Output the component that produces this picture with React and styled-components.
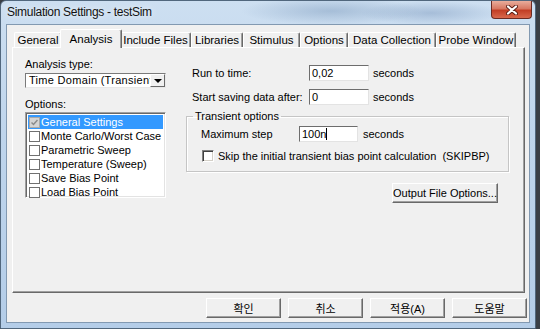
import React from "react";
import styled, { createGlobalStyle } from "styled-components";

const GlobalStyle = createGlobalStyle`
  html, body {
    margin: 0;
    padding: 0;
    background: #3a3f46;
  }
  body {
    font-family: "Liberation Sans", "Noto Sans CJK KR", sans-serif;
    font-size: 11px;
    color: #000;
  }
  * { box-sizing: border-box; }
`;

const Window = styled.div`
  width: 536px;
  height: 329px;
  display: flex;
  flex-direction: column;
  border: 1px solid #51677d;
  border-radius: 6px 6px 0 0;
  padding: 0 5px 5px;
  background:
    radial-gradient(ellipse 90px 14px at 330px 10px, rgba(120, 150, 185, 0.45), transparent),
    radial-gradient(ellipse 70px 12px at 430px 12px, rgba(110, 140, 180, 0.4), transparent),
    linear-gradient(180deg, #cddff1 0%, #bfd5ec 40%, #b4cde8 100%);
`;

const TitleBar = styled.div`
  height: 23px;
  margin: 0 -5px;
  padding: 0 3px 0 6px;
  display: flex;
  align-items: flex-start;
`;

const Title = styled.span`
  font-size: 12px;
  line-height: 22px;
  letter-spacing: -0.3px;
  color: #111;
  text-shadow: 0 0 6px rgba(255, 255, 255, 0.9);
`;

const CloseButton = styled.div`
  margin-left: auto;
  width: 41px;
  height: 18px;
  border: 1px solid #6b2a22;
  border-top: none;
  border-radius: 0 0 4px 4px;
  background: linear-gradient(180deg, #e9ad9c 0%, #d77862 45%, #c23e25 55%, #d8684c 100%);
  display: flex;
  align-items: center;
  justify-content: center;
`;

const Client = styled.div`
  flex: 1;
  display: flex;
  flex-direction: column;
  background: #f0f0f0;
  border: 1px solid #8299b1;
  padding: 4px 4px 3px 5px;
`;

const TabStrip = styled.div`
  display: flex;
  align-items: flex-end;
  height: 18px;
  padding-left: 2px;
  position: relative;
  z-index: 1;
`;

const Tab = styled.div`
  width: ${(p) => (p.$active ? p.$w + 4 : p.$w)}px;
  height: ${(p) => (p.$active ? 19 : 15)}px;
  margin: ${(p) => (p.$active ? "0 -2px -1px" : "0")};
  background: #f0f0f0;
  border-top: 1px solid #fff;
  border-left: 1px solid #fff;
  border-right: 1px solid #696969;
  box-shadow: inset -1px 0 0 #a0a0a0;
  border-radius: 2px 2px 0 0;
  display: flex;
  align-items: ${(p) => (p.$active ? "flex-start" : "center")};
  justify-content: center;
  padding-top: ${(p) => (p.$active ? 2 : 0)}px;
  font-size: 11.5px;
  line-height: 14px;
  white-space: nowrap;
  position: relative;
  z-index: ${(p) => (p.$active ? 2 : 1)};
`;

const Panel = styled.div`
  height: 246px;
  display: flex;
  gap: 20px;
  padding: 9px 0 0 12px;
  border: 1px solid;
  border-color: #fff #696969 #696969 #fff;
  box-shadow: inset -1px -1px 0 #a0a0a0;
`;

const LeftColumn = styled.div`
  width: 141px;
  display: flex;
  flex-direction: column;
`;

const FieldLabel = styled.div`
  line-height: 14px;
  margin-top: ${(p) => p.$top || 0}px;
`;

const Combo = styled.div`
  margin-top: 2px;
  height: 15px;
  display: flex;
  background: #fff;
  border: 1px solid;
  border-color: #7a7a7a #e8e8e8 #e8e8e8 #7a7a7a;
  overflow: hidden;
`;

const ComboText = styled.div`
  flex: 1;
  padding-left: 3px;
  line-height: 13px;
  letter-spacing: 0.3px;
  white-space: nowrap;
  overflow: hidden;
`;

const ComboButton = styled.div`
  width: 15px;
  height: 13px;
  flex: none;
  background: #f0f0f0;
  border: 1px solid;
  border-color: #fff #696969 #696969 #fff;
  display: flex;
  align-items: center;
  justify-content: center;
`;

const Arrow = styled.span`
  width: 0;
  height: 0;
  border-left: 4px solid transparent;
  border-right: 4px solid transparent;
  border-top: 4px solid #000;
`;

const ListBox = styled.div`
  margin-top: 1px;
  height: 86px;
  background: #fff;
  border: 1px solid;
  border-color: #a0a0a0 #fff #fff #a0a0a0;
  box-shadow: inset 1px 1px 0 #696969, inset -1px -1px 0 #e3e3e3;
  padding: 2px 2px 0 2px;
`;

const ListItem = styled.div`
  height: 14px;
  display: flex;
  align-items: center;
  gap: 1px;
  white-space: nowrap;
  background: ${(p) => (p.$selected ? "#3399ff" : "transparent")};
  color: ${(p) => (p.$selected ? "#fff" : "#000")};
`;

const ListCheck = styled.span`
  width: 11px;
  height: 11px;
  margin-left: 1px;
  flex: none;
  border: 1px solid ${(p) => (p.$checked ? "#a8a8a8" : "#707070")};
  background: ${(p) => (p.$checked ? "#d4d4d4" : "#fff")};
  display: flex;
  align-items: center;
  justify-content: center;
`;

const RightColumn = styled.div`
  width: 323px;
  display: flex;
  flex-direction: column;
  padding-top: 8px;
`;

const Row = styled.div`
  display: flex;
  align-items: center;
  height: 16px;
  margin-bottom: ${(p) => p.$gap || 0}px;
`;

const RowLabel = styled.span`
  width: ${(p) => p.$w}px;
  margin-left: ${(p) => p.$indent || 0}px;
  flex: none;
  white-space: nowrap;
`;

const TextInput = styled.div`
  width: ${(p) => p.$w}px;
  height: 16px;
  flex: none;
  background: #fff;
  border: 1px solid;
  border-color: #6d6d6d #e3e3e3 #e3e3e3 #6d6d6d;
  padding-left: 2px;
  line-height: 14px;
  display: flex;
  align-items: center;
`;

const Caret = styled.span`
  width: 1px;
  height: 12px;
  background: #000;
`;

const Unit = styled.span`
  margin-left: ${(p) => p.$gap}px;
`;

const GroupBox = styled.fieldset`
  margin: 4px 0 0;
  padding: 3px 14px 8px;
  border: 1px solid #c5c5c5;
  box-shadow: inset 1px 1px 0 #fff, 1px 1px 0 #fff;
  display: flex;
  flex-direction: column;
  gap: 7px;
  min-width: 0;
`;

const Legend = styled.legend`
  padding: 0 2px;
  margin-left: -8px;
  line-height: 14px;
`;

const CheckRow = styled.label`
  display: flex;
  align-items: center;
  gap: 4px;
  height: 14px;
  white-space: nowrap;
`;

const CheckBox = styled.span`
  width: 12px;
  height: 12px;
  flex: none;
  margin-left: 1px;
  background: #fff;
  border: 1px solid;
  border-color: #808080 #fff #fff #808080;
  box-shadow: inset 1px 1px 0 #404040, inset -1px -1px 0 #d4d0c8;
`;

const Button = styled.button`
  width: ${(p) => p.$w}px;
  height: 20px;
  padding: 0;
  font: inherit;
  white-space: nowrap;
  color: #000;
  background: #f0f0f0;
  border: 1px solid;
  border-color: #fff #696969 #696969 #fff;
  box-shadow: inset -1px -1px 0 #a0a0a0;
`;

const OutputButton = styled(Button)`
  align-self: flex-end;
  margin: 11px 11px 0 0;
`;

const ButtonRow = styled.div`
  display: flex;
  justify-content: flex-end;
  gap: 7px;
  margin: 5px -2px 0 0;
`;

const tabs = [
  { label: "General", w: 48 },
  { label: "Analysis", w: 58, active: true },
  { label: "Include Files", w: 71 },
  { label: "Libraries", w: 52 },
  { label: "Stimulus", w: 57 },
  { label: "Options", w: 48 },
  { label: "Data Collection", w: 88 },
  { label: "Probe Window", w: 80 },
];

const options = [
  "General Settings",
  "Monte Carlo/Worst Case",
  "Parametric Sweep",
  "Temperature (Sweep)",
  "Save Bias Point",
  "Load Bias Point",
];

const CloseIcon = () => (
  <svg width="12" height="10" viewBox="0 0 12 10">
    <path d="M2 1.5 L10 8.5 M10 1.5 L2 8.5" stroke="#5a1d14" strokeWidth="4" strokeLinecap="round" />
    <path d="M2 1.5 L10 8.5 M10 1.5 L2 8.5" stroke="#fff" strokeWidth="2.2" strokeLinecap="round" />
  </svg>
);

const SmallCheck = () => (
  <svg width="7" height="7" viewBox="0 0 7 7">
    <path d="M0.5 3.5 L2.5 5.5 L6.5 1" stroke="#8a8a8a" strokeWidth="1.5" fill="none" />
  </svg>
);

export default function App() {
  return (
    <>
      <GlobalStyle />
      <Window>
        <TitleBar>
          <Title>Simulation Settings - testSim</Title>
          <CloseButton>
            <CloseIcon />
          </CloseButton>
        </TitleBar>
        <Client>
          <TabStrip>
            {tabs.map((t) => (
              <Tab key={t.label} $w={t.w} $active={t.active}>
                {t.label}
              </Tab>
            ))}
          </TabStrip>
          <Panel>
            <LeftColumn>
              <FieldLabel>Analysis type:</FieldLabel>
              <Combo>
                <ComboText>Time Domain (Transient)</ComboText>
                <ComboButton>
                  <Arrow />
                </ComboButton>
              </Combo>
              <FieldLabel $top={9}>Options:</FieldLabel>
              <ListBox>
                {options.map((o, i) => (
                  <ListItem key={o} $selected={i === 0}>
                    <ListCheck $checked={i === 0}>{i === 0 && <SmallCheck />}</ListCheck>
                    {o}
                  </ListItem>
                ))}
              </ListBox>
            </LeftColumn>
            <RightColumn>
              <Row $gap={8}>
                <RowLabel $w={117} $indent={6}>Run to time:</RowLabel>
                <TextInput $w={60}>0,02</TextInput>
                <Unit $gap={4}>seconds</Unit>
              </Row>
              <Row>
                <RowLabel $w={117} $indent={6}>Start saving data after:</RowLabel>
                <TextInput $w={60}>0</TextInput>
                <Unit $gap={4}>seconds</Unit>
              </Row>
              <GroupBox>
                <Legend>Transient options</Legend>
                <Row>
                  <RowLabel $w={98}>Maximum step</RowLabel>
                  <TextInput $w={59}>
                    100n
                    <Caret />
                  </TextInput>
                  <Unit $gap={5}>seconds</Unit>
                </Row>
                <CheckRow>
                  <CheckBox />
                  Skip the initial transient bias point calculation&nbsp; (SKIPBP)
                </CheckRow>
              </GroupBox>
              <OutputButton $w={106}>Output File Options...</OutputButton>
            </RightColumn>
          </Panel>
          <ButtonRow>
            <Button $w={75}>확인</Button>
            <Button $w={75}>취소</Button>
            <Button $w={75}>적용(A)</Button>
            <Button $w={75}>도움말</Button>
          </ButtonRow>
        </Client>
      </Window>
    </>
  );
}
